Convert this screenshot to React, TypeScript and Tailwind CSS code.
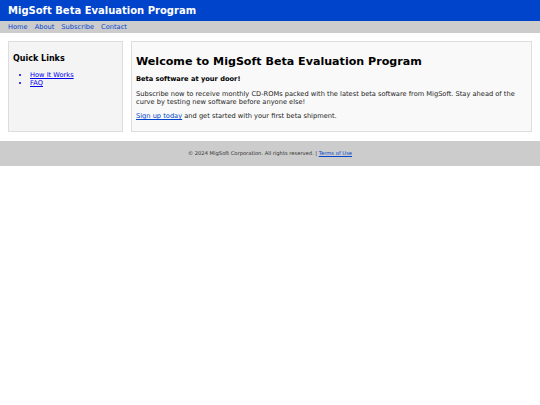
export default function App() {
  return (
    <div className="min-h-[405px] bg-white font-['DejaVu_Sans',sans-serif] text-[#222]">
      <header className="flex h-[21px] items-center bg-[#0044cc] px-[8px]">
        <h1 className="text-[10px] font-bold leading-none text-white">MigSoft Beta Evaluation Program</h1>
      </header>
      <nav className="flex h-[12px] items-center gap-[7px] bg-[#cccccc] px-[8px] text-[6.67px] leading-none text-[#0044cc]">
        <a href="#">Home</a>
        <a href="#">About</a>
        <a href="#">Subscribe</a>
        <a href="#">Contact</a>
      </nav>
      <main className="flex gap-[8px] px-[8px] pt-[8px]">
        <aside className="h-[91px] w-[115px] border border-[#dddddd] bg-[#f4f4f4] px-[4px] pt-[13px]">
          <h2 className="text-[8px] font-bold leading-none text-black">Quick Links</h2>
          <ul className="mt-[8px] list-disc pl-[17px] text-[6.67px] leading-[8px] text-[#0000ee]">
            <li><a href="#" className="underline">How It Works</a></li>
            <li><a href="#" className="underline">FAQ</a></li>
          </ul>
        </aside>
        <section className="h-[91px] flex-1 border border-[#dddddd] bg-[#f9f9f9] px-[4px] pt-[14px]">
          <h2 className="text-[11.1px] font-bold leading-none text-black">Welcome to MigSoft Beta Evaluation Program</h2>
          <h3 className="mt-[9px] text-[6.67px] font-bold leading-none text-black">Beta software at your door!</h3>
          <p className="mt-[8px] text-[6.67px] leading-[7.8px]">
            Subscribe now to receive monthly CD-ROMs packed with the latest beta software from MigSoft. Stay ahead of the curve by testing new software before anyone else!
          </p>
          <p className="mt-[7px] text-[6.67px] leading-[7.8px]">
            <a href="#" className="text-[#0044cc] underline">Sign up today</a> and get started with your first beta shipment.
          </p>
        </section>
      </main>
      <footer className="mt-[9px] flex h-[25px] items-center justify-center bg-[#cccccc] text-[5.2px] leading-none text-[#333]">
        <span>
          © 2024 MigSoft Corporation. All rights reserved. | <a href="#" className="text-[#0044cc] underline">Terms of Use</a>
        </span>
      </footer>
    </div>
  )
}
